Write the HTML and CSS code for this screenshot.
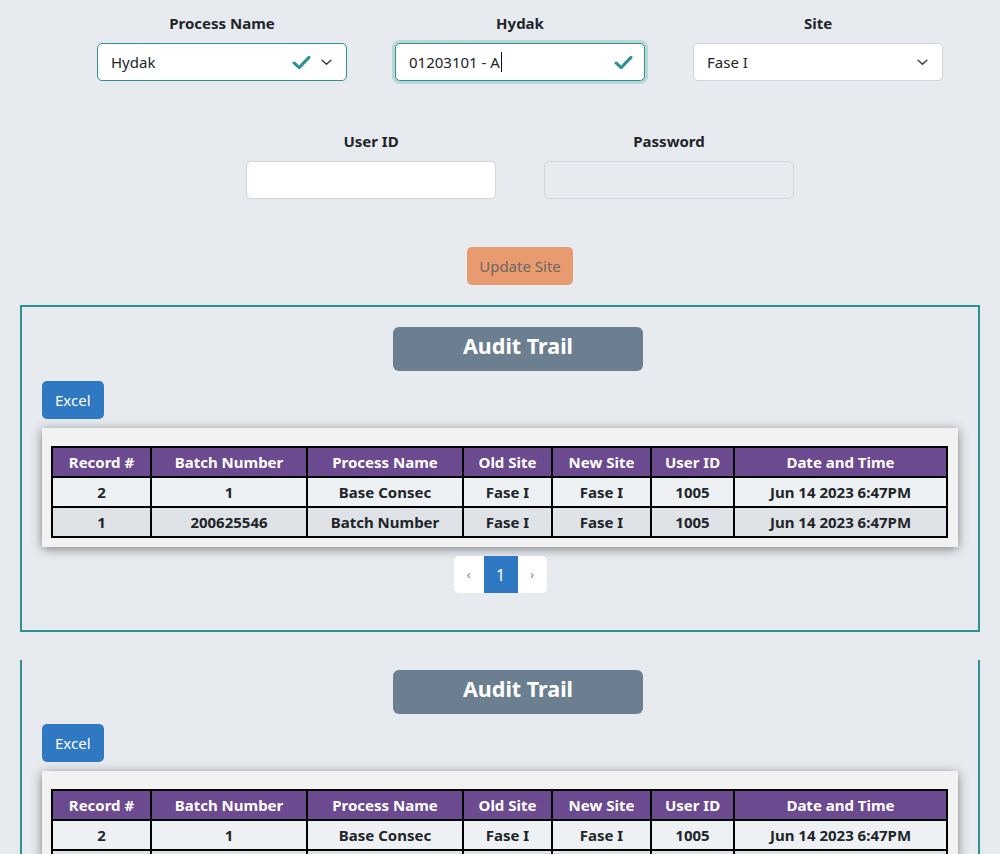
FILE: index.html
```html
<!DOCTYPE html>
<html lang="en">
<head>
<meta charset="utf-8">
<title>Update Site</title>
<link rel="stylesheet" href="styles.css">
</head>
<body>
<div class="form-row cols-3">
  <div class="field">
    <label class="field-label">Process Name</label>
    <div class="control valid">
      <span class="control-text">Hydak</span>
      <svg class="check" viewBox="0 0 20 16" width="19" height="15"><path d="M2 8.5 L7.5 13.5 L18 2.5" fill="none" stroke="#2e9090" stroke-width="3.2" stroke-linecap="round" stroke-linejoin="round"/></svg>
      <svg class="chev" viewBox="0 0 12 8" width="11" height="7"><path d="M1 1.5 L6 6 L11 1.5" fill="none" stroke="#343a40" stroke-width="1.6" stroke-linecap="round" stroke-linejoin="round"/></svg>
    </div>
  </div>
  <div class="field">
    <label class="field-label">Hydak</label>
    <div class="control valid focus">
      <span class="control-text">01203101 - A<span class="caret"></span></span>
      <svg class="check" viewBox="0 0 20 16" width="19" height="15"><path d="M2 8.5 L7.5 13.5 L18 2.5" fill="none" stroke="#2e9090" stroke-width="3.2" stroke-linecap="round" stroke-linejoin="round"/></svg>
    </div>
  </div>
  <div class="field">
    <label class="field-label">Site</label>
    <div class="control">
      <span class="control-text">Fase I</span>
      <svg class="chev" viewBox="0 0 12 8" width="11" height="7"><path d="M1 1.5 L6 6 L11 1.5" fill="none" stroke="#343a40" stroke-width="1.6" stroke-linecap="round" stroke-linejoin="round"/></svg>
    </div>
  </div>
</div>

<div class="form-row cols-2">
  <div class="field">
    <label class="field-label">User ID</label>
    <div class="control"></div>
  </div>
  <div class="field">
    <label class="field-label">Password</label>
    <div class="control disabled"></div>
  </div>
</div>

<div class="actions">
  <button class="btn-update">Update Site</button>
</div>

<section class="audit">
  <div class="audit-title-wrap"><h2 class="audit-title">Audit Trail</h2></div>
  <button class="btn-excel">Excel</button>
  <div class="table-card">
    <table class="audit-table">
      <colgroup>
        <col class="c1"><col class="c2"><col class="c3"><col class="c4"><col class="c5"><col class="c6"><col class="c7">
      </colgroup>
      <thead>
        <tr><th>Record #</th><th>Batch Number</th><th>Process Name</th><th>Old Site</th><th>New Site</th><th>User ID</th><th>Date and Time</th></tr>
      </thead>
      <tbody>
        <tr class="odd"><td>2</td><td>1</td><td>Base Consec</td><td>Fase I</td><td>Fase I</td><td>1005</td><td>Jun 14 2023 6:47PM</td></tr>
        <tr class="even"><td>1</td><td>200625546</td><td>Batch Number</td><td>Fase I</td><td>Fase I</td><td>1005</td><td>Jun 14 2023 6:47PM</td></tr>
      </tbody>
    </table>
  </div>
  <div class="pager">
    <span class="page-item">‹</span><span class="page-item active">1</span><span class="page-item">›</span>
  </div>
</section>

<section class="audit audit-second">
  <div class="audit-title-wrap"><h2 class="audit-title">Audit Trail</h2></div>
  <button class="btn-excel">Excel</button>
  <div class="table-card">
    <table class="audit-table">
      <colgroup>
        <col class="c1"><col class="c2"><col class="c3"><col class="c4"><col class="c5"><col class="c6"><col class="c7">
      </colgroup>
      <thead>
        <tr><th>Record #</th><th>Batch Number</th><th>Process Name</th><th>Old Site</th><th>New Site</th><th>User ID</th><th>Date and Time</th></tr>
      </thead>
      <tbody>
        <tr class="odd"><td>2</td><td>1</td><td>Base Consec</td><td>Fase I</td><td>Fase I</td><td>1005</td><td>Jun 14 2023 6:47PM</td></tr>
        <tr class="even"><td>1</td><td>200625546</td><td>Batch Number</td><td>Fase I</td><td>Fase I</td><td>1005</td><td>Jun 14 2023 6:47PM</td></tr>
      </tbody>
    </table>
  </div>
  <div class="pager">
    <span class="page-item">‹</span><span class="page-item active">1</span><span class="page-item">›</span>
  </div>
</section>
</body>
</html>
```
FILE: styles.css
```css
* { box-sizing: border-box; }
html, body { margin: 0; padding: 0; }
body {
  background: #e7ebef;
  font-family: "Noto Sans", "Open Sans", "DejaVu Sans", sans-serif;
  color: #212529;
  padding: 13px 20px 0 20px;
  overflow: hidden;
  height: 854px;
}
.form-row {
  display: grid;
  column-gap: 48px;
  justify-content: center;
  padding-left: 40px;
}
.cols-3 { grid-template-columns: repeat(3, 250px); }
.cols-2 { grid-template-columns: repeat(2, 250px); margin-top: 50px; }
.field { display: flex; flex-direction: column; align-items: stretch; }
.field-label {
  text-align: center;
  font-weight: 700;
  font-size: 15px;
  line-height: 20px;
  margin-bottom: 10px;
  color: #212529;
}
.control {
  height: 38px;
  background: #fff;
  border: 1px solid #ced4da;
  border-radius: 5px;
  display: flex;
  align-items: center;
  padding: 0 14px 0 13px;
  font-size: 15px;
  color: #212529;
}
.control.valid { border-color: #2e9090; }
.control.focus { box-shadow: 0 0 0 3px #b8d6d7; }
.control.disabled { background: #e7ebef; }
.control-text { flex: 1; display: flex; align-items: center; }
.caret { display: inline-block; width: 1px; height: 20px; background: #111; margin-left: 1px; }
.check { margin-right: 10px; }
.control.focus .check { margin-right: -3px; }
.actions { display: flex; justify-content: center; padding-left: 40px; margin-top: 48px; }
.btn-update {
  height: 38px;
  padding: 0 12px;
  border: none;
  border-radius: 5px;
  background: #e99b70;
  color: #6e6660;
  font-family: inherit;
  font-size: 15px;
}
.audit {
  margin-top: 20px;
  border: 2px solid #2e9090;
  padding: 20px 20px 37px 20px;
}
.audit-second {
  margin-top: 28px;
  border-top: none;
  padding-top: 10px;
}
.audit-title-wrap { display: flex; justify-content: center; padding-left: 36px; }
.audit-title {
  margin: 0;
  width: 250px;
  height: 44px;
  background: #6c7f91;
  border-radius: 6px;
  color: #fff;
  font-size: 21.5px;
  font-weight: 700;
  line-height: 38px;
  padding-bottom: 6px;
  text-align: center;
}
.btn-excel {
  display: block;
  margin-top: 10px;
  height: 38px;
  padding: 0 13px;
  border: none;
  border-radius: 5px;
  background: #2f79c3;
  color: #fff;
  font-family: inherit;
  font-size: 15px;
}
.table-card {
  margin-top: 9px;
  background: #f2f2f2;
  padding: 18px 10px 9px 9px;
  box-shadow: 0 2px 10px rgba(0,0,0,0.45);
}
.audit-table {
  width: 100%;
  border-collapse: collapse;
  table-layout: fixed;
  font-size: 15px;
  font-weight: 700;
  text-align: center;
}
.c1 { width: 99px; } .c2 { width: 156px; } .c3 { width: 156px; } .c4 { width: 89px; }
.c5 { width: 99px; } .c6 { width: 83px; } .c7 { width: auto; }
.audit-table th, .audit-table td {
  border: 2px solid #000;
  line-height: 20px;
  white-space: nowrap;
}
.audit-table th {
  background: #6b4a8f;
  color: #fff;
  padding: 4px 2px 4px;
}
.audit-table td { padding: 4px 2px; color: #212529; }
.audit-table tr.odd td { background: #eef1f4; }
.audit-table tr.even td { background: #dfe2e6; }
.pager {
  margin-top: 9px;
  display: flex;
  justify-content: center;
}
.pager .page-item {
  height: 37px;
  width: 30px;
  display: flex;
  align-items: center;
  justify-content: center;
  background: #fff;
  color: #6c7a89;
  font-size: 12px;
}
.pager .page-item:first-child { border-radius: 5px 0 0 5px; }
.pager .page-item:last-child { border-radius: 0 5px 5px 0; width: 29px; }
.pager .page-item.active {
  width: 34px;
  background: #2f79c3;
  color: #fff;
  font-size: 16px;
}
```
